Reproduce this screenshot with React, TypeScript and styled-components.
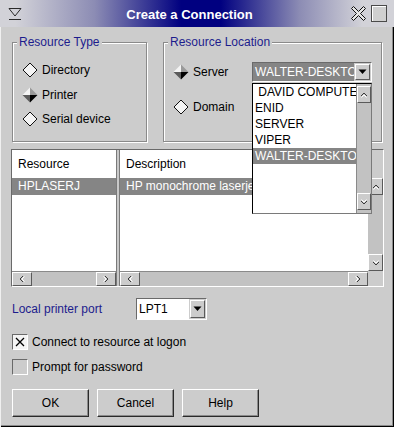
import React from "react";
import styled, { createGlobalStyle } from "styled-components";

const GlobalStyle = createGlobalStyle`
  html, body {
    margin: 0;
    padding: 0;
    background: #cccccc;
  }
  body {
    font-family: "Liberation Sans", Arial, sans-serif;
    font-size: 12px;
    color: #000;
  }
  * {
    box-sizing: border-box;
  }
`;

const raised = `
  background: #cccccc;
  border-top: 1px solid #ffffff;
  border-left: 1px solid #ffffff;
  border-right: 1px solid #5a5a5a;
  border-bottom: 1px solid #5a5a5a;
`;

const sunken = `
  border-top: 1px solid #6a6a6a;
  border-left: 1px solid #6a6a6a;
  border-right: 1px solid #ffffff;
  border-bottom: 1px solid #ffffff;
`;

const Arrow: React.FC<{ dir: "left" | "right" | "up" | "down" }> = ({ dir }) => {
  const rot = { left: 0, up: 90, right: 180, down: 270 }[dir];
  return (
    <svg width="8" height="8" viewBox="0 0 8 8" style={{ transform: `rotate(${rot}deg)` }}>
      <path d="M5 1 L2 4 L5 7" stroke="#3a3a3a" strokeWidth="1" fill="none" />
      <path d="M6.5 1.5 L4 4 L6.5 6.5" stroke="#ffffff" strokeWidth="1" fill="none" />
    </svg>
  );
};

const DownTriangle = () => (
  <svg width="9" height="6" viewBox="0 0 9 6">
    <polygon points="0.5,0.5 8.5,0.5 4.5,5" fill="#000" />
  </svg>
);

const Diamond: React.FC<{ checked?: boolean }> = ({ checked }) =>
  checked ? (
    <svg width="16" height="16" viewBox="0 0 16 16">
      <polygon points="8,0.5 8,8 0.5,8" fill="#f4f4f4" />
      <polygon points="8,0.5 15.5,8 8,8" fill="#9a9a9a" />
      <polygon points="0.5,8 8,8 8,15.5" fill="#5c5c5c" />
      <polygon points="8,8 15.5,8 8,15.5" fill="#000" />
    </svg>
  ) : (
    <svg width="16" height="16" viewBox="0 0 16 16">
      <polygon points="8,1 15,8 8,15 1,8" fill="#f4f4f4" stroke="#111" strokeWidth="1" />
    </svg>
  );

const Window = styled.div`
  position: relative;
  width: 394px;
  height: 427px;
  background: #cccccc;
  display: flex;
  flex-direction: column;
  overflow: hidden;
  box-shadow: inset 1px 1px 0 #f0f0f0, inset -1px -1px 0 #000,
    inset -2px -2px 0 #8a8a8a;
`;

const TitleBar = styled.div`
  height: 27px;
  display: flex;
  align-items: center;
  background: linear-gradient(
    to right,
    #d2d2d8 4%,
    #8c8cb4 24%,
    #000080 46%,
    #000080 56%,
    #8c8cb4 76%,
    #d2d2d8 92%
  );
`;

const MenuIcon = styled.div`
  width: 29px;
  display: flex;
  justify-content: center;
  padding-top: 1px;
`;

const TitleText = styled.div`
  flex: 1;
  text-align: center;
  color: #fff;
  font-weight: bold;
  font-size: 13px;
  padding-top: 1px;
`;

const TitleButtons = styled.div`
  display: flex;
  align-items: center;
  gap: 4px;
  padding-right: 7px;
`;

const MaxBox = styled.div`
  width: 16px;
  height: 17px;
  background: #d0d0d0;
  border: 1px solid #4a4a4a;
  box-shadow: inset 1px 1px 0 #fff;
`;

const Content = styled.div`
  padding: 15px 0 0 12px;
  display: flex;
  flex-direction: column;
`;

const TopRow = styled.div`
  display: flex;
  gap: 16px;
  height: 100px;
`;

const GroupBox = styled.div<{ $width: number }>`
  position: relative;
  width: ${(p) => p.$width}px;
  height: 100px;
  border: 1px solid #8a8a8a;
  box-shadow: 1px 1px 0 #fff, inset 1px 1px 0 #fff;
  padding: 19px 0 0 9px;
  display: flex;
  flex-direction: column;
`;

const GroupTitle = styled.div`
  position: absolute;
  top: -8px;
  left: 4px;
  padding: 0 2px;
  line-height: 14px;
  background: #cccccc;
  color: #1c1c8c;
`;

const RadioList = styled.div`
  display: flex;
  flex-direction: column;
  gap: 8.5px;
`;

const Radio = styled.div<{ $width?: number }>`
  display: flex;
  align-items: center;
  gap: 4px;
  height: 16px;
  width: ${(p) => (p.$width ? `${p.$width}px` : "auto")};
  white-space: nowrap;
`;

const LocationRow = styled.div<{ $gap?: number }>`
  display: flex;
  align-items: center;
  margin-top: ${(p) => p.$gap ?? 0}px;
`;

const Combo = styled.div<{ $width: number }>`
  position: relative;
  width: ${(p) => p.$width}px;
  height: ${(p) => (p.$width > 100 ? 20 : 22)}px;
  display: flex;
  background: #cccccc;
  ${sunken}
`;

const ComboField = styled.div<{ $selected?: boolean }>`
  flex: 1;
  background: ${(p) => (p.$selected ? "#858585" : "#fff")};
  color: ${(p) => (p.$selected ? "#fff" : "#000")};
  padding-left: 2px;
  display: flex;
  align-items: center;
  overflow: hidden;
  white-space: nowrap;
`;

const ComboButton = styled.div`
  width: 15px;
  margin: 1px 1px 1px 1px;
  display: flex;
  align-items: center;
  justify-content: center;
  ${raised}
`;

const DropList = styled.div`
  position: absolute;
  top: 20px;
  left: -1px;
  width: 120px;
  height: 131px;
  background: #fff;
  border: 1px solid #000;
  border-right-color: #7a7a7a;
  border-bottom-color: #7a7a7a;
  display: flex;
  z-index: 10;
`;

const DropItems = styled.div`
  flex: 1;
  overflow: hidden;
`;

const DropItem = styled.div<{ $selected?: boolean }>`
  height: 16px;
  line-height: 16px;
  padding-left: 2px;
  white-space: pre;
  overflow: hidden;
  background: ${(p) => (p.$selected ? "#858585" : "transparent")};
  color: ${(p) => (p.$selected ? "#fff" : "#000")};
`;

const VScroll = styled.div`
  width: 15px;
  display: flex;
  flex-direction: column;
  justify-content: space-between;
  background: #c2c2c2;
`;

const DropScroll = styled(VScroll)`
  padding: 2px 0 3px;
  border-left: 1px solid #8a8a8a;
`;

const VButton = styled.div`
  height: 17px;
  display: flex;
  align-items: center;
  justify-content: center;
  ${raised}
`;

const ListView = styled.div`
  margin: 7px 0 0 -1px;
  width: 373px;
  height: 138px;
  display: flex;
  gap: 2px;
  background: #c8c8c8;
  ${sunken}
`;

const LeftPane = styled.div`
  width: 105px;
  display: grid;
  grid-template-rows: 28px 1fr 15px;
  border-right: 1px solid #7a7a7a;
`;

const RightPane = styled.div`
  flex: 1;
  display: grid;
  grid-template-columns: 1fr 15px;
  grid-template-rows: 28px 1fr 15px;
  border-left: 1px solid #7a7a7a;
`;

const Header = styled.div`
  background: #fff;
  padding-left: 6px;
  line-height: 28px;
  white-space: nowrap;
  overflow: hidden;
`;

const Cells = styled.div`
  background: #fff;
  overflow: hidden;
`;

const Row = styled.div<{ $selected?: boolean }>`
  height: 17px;
  line-height: 17px;
  padding-left: 6px;
  white-space: nowrap;
  overflow: hidden;
  background: ${(p) => (p.$selected ? "#858585" : "transparent")};
  color: ${(p) => (p.$selected ? "#fff" : "#000")};
`;

const Filler = styled.div`
  background: #cccccc;
`;

const HScroll = styled.div`
  display: flex;
  justify-content: space-between;
  background: #c2c2c2;
  border-top: 1px solid #8a8a8a;
`;

const HButton = styled.div`
  width: 20px;
  display: flex;
  align-items: center;
  justify-content: center;
  ${raised}
`;

const PortRow = styled.div`
  margin-top: 11px;
  height: 22px;
  display: flex;
  align-items: center;
`;

const PortLabel = styled.div`
  width: 124px;
  color: #1c1c8c;
`;

const CheckRow = styled.div<{ $gap: number }>`
  margin-top: ${(p) => p.$gap}px;
  height: 16px;
  display: flex;
  align-items: center;
  gap: 4px;
`;

const CheckBox = styled.div<{ $checked?: boolean }>`
  width: 16px;
  height: 16px;
  background: ${(p) => (p.$checked ? "#f4f4f4" : "#cccccc")};
  ${sunken}
  display: flex;
  align-items: center;
  justify-content: center;
`;

const ButtonRow = styled.div`
  margin-top: 14px;
  display: flex;
  gap: 8px;
`;

const Button = styled.div`
  width: 77px;
  height: 28px;
  display: flex;
  align-items: center;
  justify-content: center;
  ${raised}
  border-right-color: #2a2a2a;
  border-bottom-color: #2a2a2a;
  box-shadow: inset -1px -1px 0 #8a8a8a;
`;

const servers = [" DAVID COMPUTER", "ENID", "SERVER", "VIPER", "WALTER-DESKTOP"];

export default function App() {
  return (
    <>
      <GlobalStyle />
      <Window>
        <TitleBar>
          <MenuIcon>
            <svg width="14" height="14" viewBox="0 0 14 14">
              <polygon points="1,1.5 13,1.5 7,9" fill="none" stroke="#2a2a2a" />
              <line x1="1" y1="12.5" x2="13" y2="12.5" stroke="#2a2a2a" />
            </svg>
          </MenuIcon>
          <TitleText>Create a Connection</TitleText>
          <TitleButtons>
            <svg width="17" height="17" viewBox="0 0 17 17">
              <polygon
                points="1.5,3.5 3.5,1.5 8.5,6.5 13.5,1.5 15.5,3.5 10.5,8.5 15.5,13.5 13.5,15.5 8.5,10.5 3.5,15.5 1.5,13.5 6.5,8.5"
                fill="#e4e4e4"
                stroke="#111"
              />
            </svg>
            <MaxBox />
          </TitleButtons>
        </TitleBar>

        <Content>
          <TopRow>
            <GroupBox $width={135}>
              <GroupTitle>Resource Type</GroupTitle>
              <RadioList>
                <Radio>
                  <Diamond />
                  Directory
                </Radio>
                <Radio>
                  <Diamond checked />
                  Printer
                </Radio>
                <Radio>
                  <Diamond />
                  Serial device
                </Radio>
              </RadioList>
            </GroupBox>

            <GroupBox $width={219}>
              <GroupTitle>Resource Location</GroupTitle>
              <LocationRow>
                <Radio $width={79}>
                  <Diamond checked />
                  Server
                </Radio>
                <Combo $width={120}>
                  <ComboField $selected>WALTER-DESKTOP</ComboField>
                  <ComboButton>
                    <DownTriangle />
                  </ComboButton>
                  <DropList>
                    <DropItems>
                      {servers.map((s) => (
                        <DropItem key={s} $selected={s === "WALTER-DESKTOP"}>
                          {s}
                        </DropItem>
                      ))}
                    </DropItems>
                    <DropScroll>
                      <VButton>
                        <Arrow dir="up" />
                      </VButton>
                      <VButton>
                        <Arrow dir="down" />
                      </VButton>
                    </DropScroll>
                  </DropList>
                </Combo>
              </LocationRow>
              <LocationRow $gap={17}>
                <Radio>
                  <Diamond />
                  Domain
                </Radio>
              </LocationRow>
            </GroupBox>
          </TopRow>

          <ListView>
            <LeftPane>
              <Header>Resource</Header>
              <Cells>
                <Row $selected>HPLASERJ</Row>
              </Cells>
              <HScroll>
                <HButton>
                  <Arrow dir="left" />
                </HButton>
                <HButton>
                  <Arrow dir="right" />
                </HButton>
              </HScroll>
            </LeftPane>
            <RightPane>
              <Header>Description</Header>
              <Filler />
              <Cells>
                <Row $selected>HP monochrome laserjet</Row>
              </Cells>
              <VScroll>
                <VButton>
                  <Arrow dir="up" />
                </VButton>
                <VButton>
                  <Arrow dir="down" />
                </VButton>
              </VScroll>
              <HScroll>
                <HButton>
                  <Arrow dir="left" />
                </HButton>
                <HButton>
                  <Arrow dir="right" />
                </HButton>
              </HScroll>
              <Filler />
            </RightPane>
          </ListView>

          <PortRow>
            <PortLabel>Local printer port</PortLabel>
            <Combo $width={71}>
              <ComboField>LPT1</ComboField>
              <ComboButton>
                <DownTriangle />
              </ComboButton>
            </Combo>
          </PortRow>

          <CheckRow $gap={14}>
            <CheckBox $checked>
              <svg width="10" height="10" viewBox="0 0 10 10">
                <path d="M1 1 L9 9 M9 1 L1 9" stroke="#000" strokeWidth="1.3" />
              </svg>
            </CheckBox>
            Connect to resource at logon
          </CheckRow>
          <CheckRow $gap={9}>
            <CheckBox />
            Prompt for password
          </CheckRow>

          <ButtonRow>
            <Button>OK</Button>
            <Button>Cancel</Button>
            <Button>Help</Button>
          </ButtonRow>
        </Content>
      </Window>
    </>
  );
}
